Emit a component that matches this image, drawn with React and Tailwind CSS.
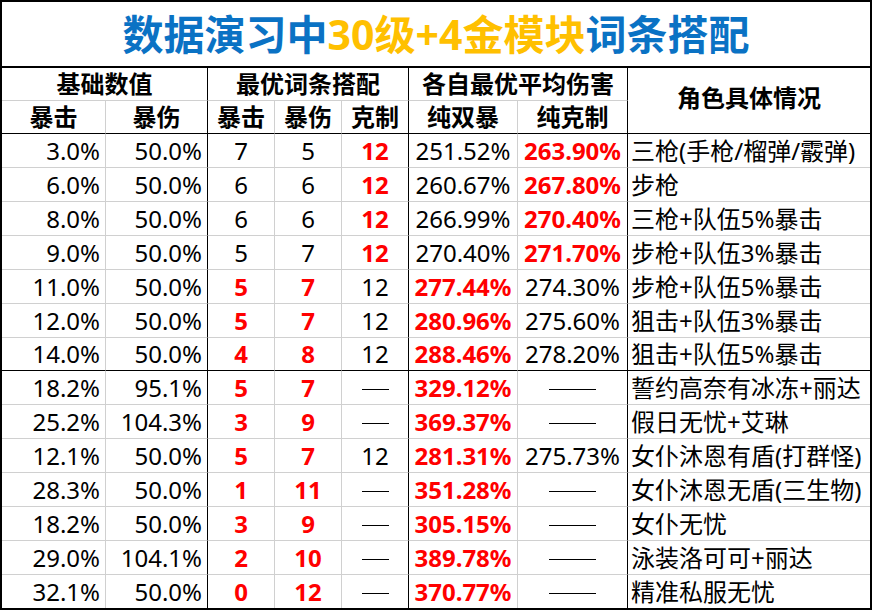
const FONT = "font-['Noto_Sans','Noto_Sans_CJK_SC',sans-serif]";

// 'crit' = 暴击/暴伤/纯双暴 are the best; 'res' = 克制/纯克制 are the best
const rows = [
  ['3.0%', '50.0%', '7', '5', '12', '251.52%', '263.90%', '三枪(手枪/榴弹/霰弹)', 'res'],
  ['6.0%', '50.0%', '6', '6', '12', '260.67%', '267.80%', '步枪', 'res'],
  ['8.0%', '50.0%', '6', '6', '12', '266.99%', '270.40%', '三枪+队伍5%暴击', 'res'],
  ['9.0%', '50.0%', '5', '7', '12', '270.40%', '271.70%', '步枪+队伍3%暴击', 'res'],
  ['11.0%', '50.0%', '5', '7', '12', '277.44%', '274.30%', '步枪+队伍5%暴击', 'crit'],
  ['12.0%', '50.0%', '5', '7', '12', '280.96%', '275.60%', '狙击+队伍3%暴击', 'crit'],
  ['14.0%', '50.0%', '4', '8', '12', '288.46%', '278.20%', '狙击+队伍5%暴击', 'crit'],
  ['18.2%', '95.1%', '5', '7', '—', '329.12%', '——', '誓约高奈有冰冻+丽达', 'crit'],
  ['25.2%', '104.3%', '3', '9', '—', '369.37%', '——', '假日无忧+艾琳', 'crit'],
  ['12.1%', '50.0%', '5', '7', '12', '281.31%', '275.73%', '女仆沐恩有盾(打群怪)', 'crit'],
  ['28.3%', '50.0%', '1', '11', '—', '351.28%', '——', '女仆沐恩无盾(三生物)', 'crit'],
  ['18.2%', '50.0%', '3', '9', '—', '305.15%', '——', '女仆无忧', 'crit'],
  ['29.0%', '104.1%', '2', '10', '—', '389.78%', '——', '泳装洛可可+丽达', 'crit'],
  ['32.1%', '50.0%', '0', '12', '—', '370.77%', '——', '精准私服无忧', 'crit'],
];

const COLS = 'grid grid-cols-[104px_102px_67px_67px_67px_109px_110px_242px]';

// right border per column
const rightBorder = [
  'border-r border-r-[#d0d0d0]',
  'border-r border-r-black',
  'border-r border-r-[#d0d0d0]',
  'border-r border-r-[#d0d0d0]',
  'border-r border-r-black',
  'border-r border-r-[#d0d0d0]',
  'border-r border-r-black',
  '',
];

const align = [
  'justify-end pr-[5px]',
  'justify-end pr-[5px]',
  'justify-center',
  'justify-center',
  'justify-center',
  'justify-center',
  'justify-center',
  'justify-start pl-[3px]',
];

const redCols = { crit: [2, 3, 5], res: [4, 6] };

// excel's dashes are drawn as one solid stroke
const Dash = ({ wide }) => (
  <span className={`block h-[1.5px] bg-black mt-[4px] ${wide ? 'w-[47px]' : 'w-[27px]'}`} />
);

const DataRow = ({ row, index }) => {
  const hot = redCols[row[8]];
  const height = index === 6 || index === 13 ? 'h-[33px]' : 'h-[34px]';
  const bottom =
    index === 13 ? '' : index === 6 ? 'border-b border-b-black' : 'border-b border-b-[#d0d0d0]';

  return (
    <div className={COLS}>
      {row.slice(0, 8).map((val, ci) => (
        <div
          key={ci}
          className={`flex items-center whitespace-nowrap text-[24px] leading-none ${height} ${bottom} ${rightBorder[ci]} ${align[ci]} ${
            hot.includes(ci) ? 'font-bold text-[#ff0000]' : 'text-black'
          }`}
        >
          {val === '—' ? <Dash /> : val === '——' ? <Dash wide /> : val}
        </div>
      ))}
    </div>
  );
};

export default function App() {
  return (
    <div className={`w-[874px] h-[611px] bg-white ${FONT}`}>
      <div className="w-[872px] border-2 border-black">
        <div className="h-[66px] border-b-2 border-b-black flex items-center justify-center text-[41px] font-bold leading-none">
          <span className="text-[#0a72c4]">数据演习中</span>
          <span className="text-[#ffc000]">30级+4金模块</span>
          <span className="text-[#0a72c4]">词条搭配</span>
        </div>

        <div className={`${COLS} grid-rows-[33px_33px] text-[24px] font-bold leading-none text-black`}>
          <div className="col-span-2 flex items-center justify-center border-r border-r-black border-b border-b-[#d0d0d0]">
            基础数值
          </div>
          <div className="col-span-3 flex items-center justify-center border-r border-r-black border-b border-b-[#d0d0d0]">
            最优词条搭配
          </div>
          <div className="col-span-2 flex items-center justify-center border-r border-r-black border-b border-b-[#d0d0d0]">
            各自最优平均伤害
          </div>
          <div className="row-span-2 flex items-center justify-center border-b border-b-black pb-[6px]">
            角色具体情况
          </div>
          {['暴击', '暴伤', '暴击', '暴伤', '克制', '纯双暴', '纯克制'].map((t, i) => (
            <div
              key={i}
              className={`flex items-center justify-center border-b border-b-black ${rightBorder[i]}`}
            >
              {t}
            </div>
          ))}
        </div>

        {rows.map((row, i) => (
          <DataRow key={i} row={row} index={i} />
        ))}
      </div>
    </div>
  );
}
